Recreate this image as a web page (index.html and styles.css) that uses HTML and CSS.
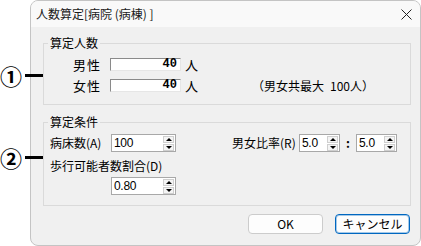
FILE: index.html
```html
<!DOCTYPE html>
<html lang="ja">
<head>
<meta charset="utf-8">
<title>人数算定</title>
<link rel="stylesheet" href="styles.css">
</head>
<body>
<div class="stage">
  <div class="callout c1"><span class="num">①</span><span class="bar"></span></div>
  <div class="callout c2"><span class="num">②</span><span class="bar"></span></div>
  <div class="window">
    <div class="titlebar">
      <span class="title">人数算定[病院 (病棟) ]</span>
      <svg class="close" width="11" height="11" viewBox="0 0 11 11"><path d="M0.5 0.5 L10.5 10.5 M10.5 0.5 L0.5 10.5" stroke="#222" stroke-width="1" fill="none"/></svg>
    </div>
    <div class="content">
      <div class="group g1">
        <div class="group-title">算定人数</div>
        <div class="count-grid">
          <span class="lbl">男性</span><span class="edit">40</span><span class="unit">人</span><span></span>
          <span class="lbl">女性</span><span class="edit">40</span><span class="unit">人</span><span class="note">（男女共最大&ensp;100人）</span>
        </div>
      </div>
      <div class="group g2">
        <div class="group-title">算定条件</div>
        <div class="cond-row">
          <span class="cond-lbl">病床数(A)</span>
          <span class="spin w65"><span class="val">100</span><span class="spin-btns"><span class="sb up"></span><span class="sb down"></span></span></span>
          <span class="ratio-lbl">男女比率(R)</span>
          <span class="spin w41"><span class="val">5.0</span><span class="spin-btns"><span class="sb up"></span><span class="sb down"></span></span></span>
          <span class="colon">:</span>
          <span class="spin w41"><span class="val">5.0</span><span class="spin-btns"><span class="sb up"></span><span class="sb down"></span></span></span>
        </div>
        <div class="walk-lbl">歩行可能者数割合(D)</div>
        <div class="walk-row">
          <span class="spin w65"><span class="val">0.80</span><span class="spin-btns"><span class="sb up"></span><span class="sb down"></span></span></span>
        </div>
      </div>
      <div class="buttons">
        <button class="btn">OK</button>
        <button class="btn default">キャンセル</button>
      </div>
    </div>
  </div>
</div>
</body>
</html>
```
FILE: styles.css
```css
* { box-sizing: border-box; }
body {
  margin: 0;
  background: #ffffff;
  font-family: "Noto Sans CJK JP", "Noto Sans", sans-serif;
  font-size: 12px;
  line-height: 14px;
  color: #000;
}
.stage {
  position: relative;
  width: 421px;
  height: 246px;
}
.callout {
  position: absolute;
  left: 0;
  display: flex;
  align-items: center;
  z-index: 2;
}
.c1 { top: 63px; }
.c2 { top: 145px; }
.num {
  font-size: 22px;
  line-height: 24px;
  width: 23px;
  text-align: left;
  font-weight: bold;
}
.bar {
  width: 18px;
  height: 3px;
  background: #000;
  margin-left: 2px;
}
.window {
  margin-left: 30px;
  width: 391px;
  height: 246px;
  border: 1px solid #c4c4c4;
  border-radius: 8px;
  background: #f0f0f0;
  overflow: hidden;
}
.titlebar {
  height: 26px;
  background: #f9f9f9;
  display: flex;
  align-items: center;
  justify-content: space-between;
  padding: 0 8px 0 5px;
}
.title { color: #1a1a1a; }
.close { display: block; }
.content {
  padding: 16px 9px 0 12px;
}
.group {
  border: 1px solid #dadada;
}
.group-title {
  margin: -8px 0 0 4px;
  padding: 0 2px;
  width: max-content;
  background: #f0f0f0;
  line-height: 14px;
}
.count-grid {
  display: grid;
  grid-template-columns: 37px 71px 25px auto;
  grid-auto-rows: 13px;
  row-gap: 8px;
  align-items: center;
  margin: 8px 0 12px 29px;
}
.lbl {
  font-size: 13px;
  line-height: 13px;
  letter-spacing: 1px;
}
.unit {
  font-size: 13px;
  line-height: 13px;
  padding-left: 4px;
}
.note {
  margin-left: 46px;
  line-height: 13px;
  white-space: nowrap;
}
.edit {
  height: 13px;
  background: #fff;
  border-top: 1px solid #8a8a8a;
  border-left: 1px solid #8a8a8a;
  border-right: 1px solid #e6e6e6;
  border-bottom: 1px solid #e6e6e6;
  text-align: right;
  padding-right: 3px;
  font-family: "Liberation Mono", monospace;
  font-weight: bold;
  font-size: 12px;
  line-height: 11px;
}
.g2 { margin-top: 17px; padding: 0 0 10px 6px; }
.g2 .group-title { margin-left: -2px; }
.cond-row {
  display: flex;
  align-items: center;
  margin-top: 5px;
  height: 18px;
}
.cond-lbl { width: 61px; }
.ratio-lbl { margin-left: 56px; width: 67px; }
.colon {
  width: 16px;
  text-align: center;
  font-weight: bold;
}
.spin {
  height: 18px;
  background: #fff;
  border: 1px solid #a8a8a8;
  display: flex;
  align-items: center;
  justify-content: space-between;
  padding: 0 1px 0 2px;
}
.w65 { width: 65px; }
.w41 { width: 41px; }
.val {
  font-family: "Liberation Sans", sans-serif;
  font-size: 12px;
  line-height: 14px;
  letter-spacing: -0.3px;
}
.spin-btns {
  display: flex;
  flex-direction: column;
  gap: 1px;
}
.sb {
  width: 11px;
  height: 7px;
  border: 1px solid #cfcfcf;
  background: #f4f4f4;
  display: flex;
  align-items: center;
  justify-content: center;
}
.sb::after {
  content: "";
  width: 0;
  height: 0;
  border-left: 3px solid transparent;
  border-right: 3px solid transparent;
}
.up::after { border-bottom: 3px solid #000; }
.down::after { border-top: 3px solid #000; }
.walk-lbl { margin-top: 7px; }
.walk-row { margin: 4px 0 0 61px; }
.buttons {
  display: flex;
  justify-content: flex-end;
  gap: 12px;
  margin: 8px 1px 0 0;
}
.btn {
  width: 75px;
  height: 20px;
  border: 1px solid #cccccc;
  border-radius: 4px;
  background: #fdfdfd;
  font-family: "Noto Sans CJK JP", sans-serif;
  font-size: 12px;
  line-height: 16px;
  padding: 0;
  color: #000;
}
.btn.default {
  border-color: #0067c0;
  box-shadow: inset 0 0 0 1px rgba(0, 103, 192, 0.35);
}
```
